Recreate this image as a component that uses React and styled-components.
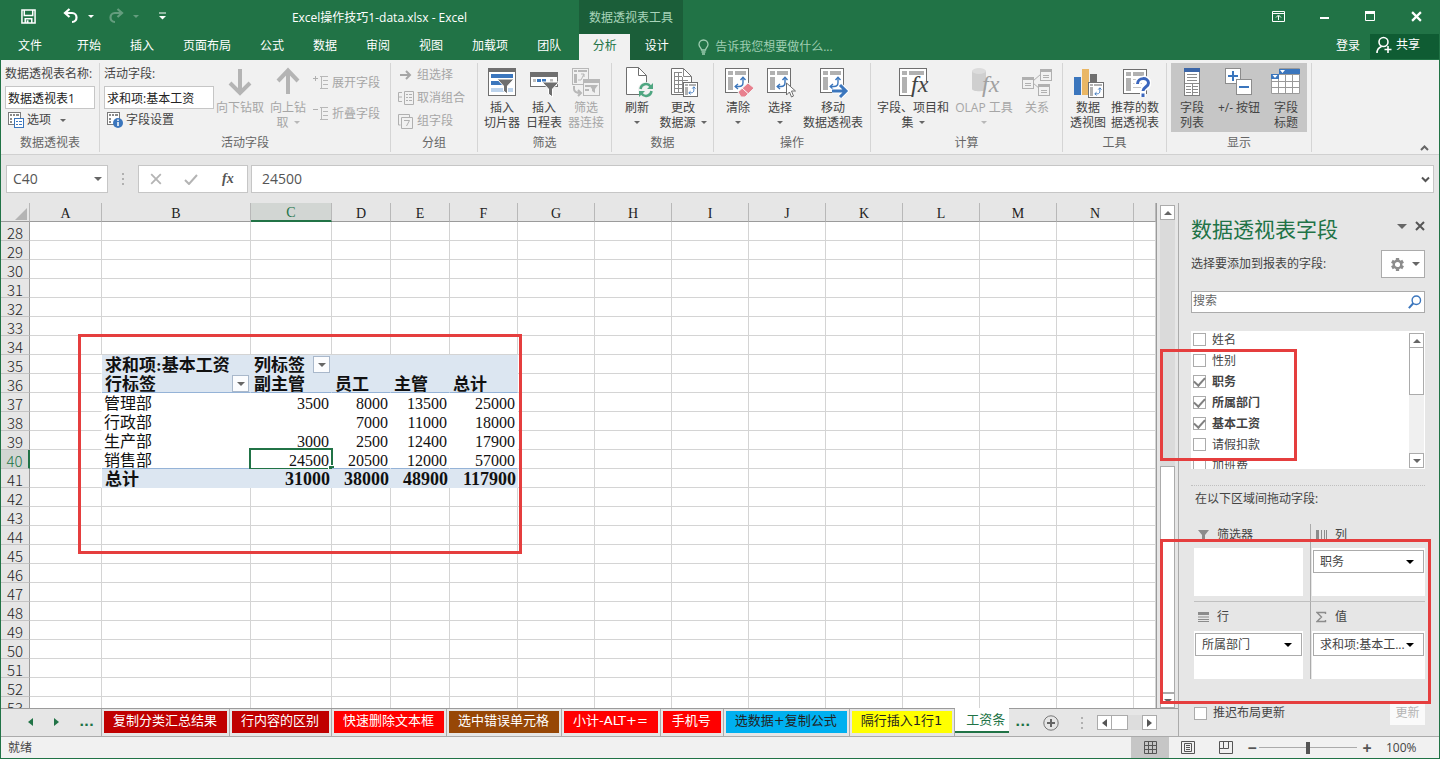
// src/App.jsx
import React from 'react';
import styled, { createGlobalStyle, css } from 'styled-components';

const GlobalStyle = createGlobalStyle`
    * {
        box-sizing: border-box;
    }

    body {
        margin: 0;
        font-family: 'Open Sans', 'Noto Sans CJK SC', sans-serif;
        font-size: 12px;
        line-height: 16px;
        color: #444444;
    }

    button,
    input {
        font: inherit;
        color: inherit;
    }

    button {
        margin: 0;
        padding: 0;
        border: none;
        background: transparent;
        cursor: pointer;
    }

    svg {
        display: block;
        flex: none;
    }
`;

const Window = styled.div`
    display: flex;
    flex-direction: column;
    height: 100vh;
    overflow: hidden;
    background-color: #e6e6e6;
    border: 1px solid #217346;
    border-top: none;
`;

const Caret = styled.span`
    display: inline-block;
    flex: none;
    border-left: ${(props) => props.$size || 3}px solid transparent;
    border-right: ${(props) => props.$size || 3}px solid transparent;
    border-top: ${(props) => props.$size || 3}px solid ${(props) => props.$color || '#666666'};
    vertical-align: middle;
`;

const CaretUp = styled(Caret)`
    border-top: none;
    border-bottom: ${(props) => props.$size || 3}px solid ${(props) => props.$color || '#666666'};
`;

/* ---------- title bar ---------- */

const TitleBar = styled.header`
    display: flex;
    flex: none;
    height: 34px;
    background-color: #217346;
    color: #ffffff;
`;

const TitleLeft = styled.div`
    display: flex;
    width: 578px;
`;

const QuickAccess = styled.div`
    display: flex;
    align-items: center;
    width: 179px;
    padding: 0 0 2px 20px;
`;

const QuickButton = styled.button`
    display: flex;
    align-items: center;
    gap: 9px;
    margin-right: ${(props) => props.$after || 0}px;
    opacity: ${(props) => (props.disabled ? 0.3 : 1)};
`;

const WindowTitle = styled.h1`
    flex: 1;
    margin: 0;
    font-size: 12px;
    font-weight: 400;
    line-height: 35px;
    text-align: center;
    white-space: nowrap;
`;

const ContextTitle = styled.div`
    width: 104px;
    background-color: #1b5e39;
    color: #a8d5ba;
    line-height: 35px;
    text-align: center;
`;

const WindowControls = styled.div`
    display: flex;
    margin-left: auto;
`;

const ControlButton = styled.button`
    display: flex;
    align-items: center;
    justify-content: center;
    width: 46px;
    height: 32px;
`;

/* ---------- ribbon tabs ---------- */

const TabRow = styled.nav`
    display: flex;
    flex: none;
    height: 26px;
    background-color: #217346;
    color: #ffffff;
`;

const TabButton = styled.button`
    padding: 0 14px 2px 15px;
    white-space: nowrap;
`;

const FileTab = styled(TabButton)`
    width: 57px;
    margin-right: 4px;
`;

const ContextTabs = styled.div`
    display: flex;
    width: 104px;
    margin-left: 4px;
    background-color: #1b5e39;
`;

const ContextTab = styled(TabButton)`
    width: ${(props) => (props.$active ? 51 : 53)}px;
    padding: 0 0 2px;
    background-color: ${(props) => (props.$active ? '#f1f1f1' : 'transparent')};
    color: ${(props) => (props.$active ? '#217346' : '#ffffff')};
`;

const TellMe = styled.label`
    display: flex;
    align-items: center;
    gap: 6px;
    padding-left: 15px;
    color: #a8d5ba;
`;

const TellMeInput = styled.input`
    width: 160px;
    padding: 0;
    border: none;
    background: transparent;

    &::placeholder {
        color: #9fceb2;
        opacity: 1;
    }
`;

const AccountArea = styled.div`
    display: flex;
    margin-left: auto;
`;

const ShareButton = styled.button`
    display: flex;
    align-items: center;
    gap: 4px;
    width: 69px;
    margin-bottom: 1px;
    padding: 0 0 3px 6px;
    background-color: #0f5c33;
`;

const LoginButton = styled.button`
    padding: 0 10px 2px;
`;

/* ---------- ribbon ---------- */

const RibbonBar = styled.section`
    position: relative;
    display: flex;
    flex: none;
    height: 95px;
    padding: 3px 0 2px;
    background-color: #f1f1f1;
    border-bottom: 1px solid #d0d0d0;
`;

const Group = styled.div`
    display: flex;
    flex-direction: column;
    flex: none;
    width: ${(props) => props.$width}px;
    border-right: 1px solid #d5d5d5;
`;

const GroupBody = styled.div`
    display: flex;
    flex: none;
    height: 71px;
    padding-left: ${(props) => props.$pad || 4}px;
`;

const GroupLabel = styled.div`
    line-height: 18px;
    text-align: center;
    color: #666666;
`;

const BigButton = styled.button`
    display: flex;
    flex-direction: column;
    align-items: center;
    gap: 2px;
    flex: none;
    width: ${(props) => props.$width}px;
    padding-top: 3px;
    line-height: 15px;
    white-space: nowrap;
    color: ${(props) => (props.disabled ? '#a6a6a6' : '#444444')};
`;

const BigLine = styled.span`
    display: flex;
    align-items: center;
    justify-content: center;
    gap: 5px;
    height: 15px;
`;

const BigLabel = styled.span`
    display: block;
`;

const PressedGroup = styled.div`
    display: flex;
    height: 69px;
    background-color: #c6c6c6;
`;

const FieldColumn = styled.div`
    display: flex;
    flex-direction: column;
    width: ${(props) => props.$width}px;
    padding-top: 3px;
`;

const FieldInput = styled.input`
    width: 100%;
    height: 23px;
    margin: 4px 0 3px;
    padding: 0 2px;
    border: 1px solid #c6c6c6;
    background-color: #ffffff;
    color: #222222;
`;

const SmallButton = styled.button`
    display: flex;
    align-items: center;
    gap: 3px;
    height: 16px;
    padding-left: 3px;
    white-space: nowrap;
    color: ${(props) => (props.disabled ? '#a6a6a6' : '#444444')};
`;

const SmallColumn = styled.div`
    display: flex;
    flex-direction: column;
    gap: ${(props) => props.$gap}px;
    padding-top: ${(props) => props.$top}px;
`;

const OptionCaret = styled(Caret)`
    margin-left: 6px;
`;

const CollapseButton = styled.button`
    align-self: flex-end;
    margin: 0 10px 0 auto;
`;

/* ---------- formula bar ---------- */

const FormulaBar = styled.section`
    display: flex;
    flex: none;
    height: 48px;
    padding: 10px 5px;
    font-size: 14px;
`;

const NameBox = styled.div`
    display: flex;
    align-items: center;
    width: 102px;
    padding-right: 5px;
    border: 1px solid #c6c6c6;
    background-color: #ffffff;
`;

const NameInput = styled.input`
    flex: 1;
    min-width: 0;
    padding: 0 6px;
    border: none;
    color: #555555;
`;

const Grip = styled.div`
    display: flex;
    flex-direction: column;
    justify-content: center;
    align-items: center;
    gap: 3px;
    width: 30px;
`;

const GripDot = styled.span`
    width: 2px;
    height: 2px;
    background-color: #b0b0b0;
`;

const FormulaButtons = styled.div`
    display: flex;
    align-items: center;
    justify-content: space-around;
    width: 110px;
    margin-right: 3px;
    border: 1px solid #c6c6c6;
    background-color: #ffffff;
`;

const FormulaField = styled.div`
    display: flex;
    align-items: center;
    flex: 1;
    padding: 0 3px 0 10px;
    border: 1px solid #c6c6c6;
    background-color: #ffffff;
`;

const FormulaInput = styled.input`
    flex: 1;
    padding: 0;
    border: none;
    color: #555555;
`;

/* ---------- sheet ---------- */

const Main = styled.main`
    display: flex;
    flex: 1;
    min-height: 0;
`;

const Workbook = styled.section`
    display: flex;
    flex-direction: column;
    flex: 1;
    min-width: 0;
`;

const SheetArea = styled.div`
    display: flex;
    flex: 1;
    min-height: 0;
`;

const SheetViewport = styled.div`
    position: relative;
    flex: 1;
    min-width: 0;
    overflow: hidden;
    border-right: 1px solid #9b9b9b;
`;

const Grid = styled.table`
    width: 100%;
    table-layout: fixed;
    border-collapse: separate;
    border-spacing: 0;
    background-color: #ffffff;
    font-family: 'Liberation Serif', 'Noto Sans CJK SC', serif;
    font-size: 16px;
    line-height: 15px;
    color: #111111;
`;

const ColHead = styled.th`
    height: 19px;
    padding: 2px 0 0;
    background-color: ${(props) => (props.$selected ? '#d2d6d3' : '#e6e6e6')};
    border-right: 1px solid #b8b8b8;
    border-bottom: ${(props) => (props.$selected ? '2px solid #217346' : '1px solid #9b9b9b')};
    color: ${(props) => (props.$selected ? '#217346' : '#222222')};
    font-size: 14px;
    font-weight: 400;
`;

const Corner = styled(ColHead)`
    padding: 3px 2px 0 14px;
`;

const CornerMark = styled.span`
    display: block;
    width: 0;
    border-left: 12px solid transparent;
    border-bottom: 12px solid #b4b4b4;
`;

const RowHead = styled.th`
    height: 19px;
    padding: 2px 0 0;
    background-color: ${(props) => (props.$selected ? '#d2d6d3' : '#e6e6e6')};
    border-right: ${(props) => (props.$selected ? '2px solid #217346' : '1px solid #9b9b9b')};
    border-bottom: 1px solid #c4c4c4;
    color: ${(props) => (props.$selected ? '#217346' : '#222222')};
    font-family: 'Noto Sans CJK SC', sans-serif;
    font-size: 15px;
    font-weight: 300;
`;

const Cell = styled.td`
    position: relative;
    height: 19px;
    padding: 3px 2px 0;
    border-right: 1px solid #d4d4d4;
    border-bottom: 1px solid #d4d4d4;
    text-align: ${(props) => (props.$number ? 'right' : 'left')};
    white-space: nowrap;

    ${(props) =>
        props.$plain &&
        css`
            border-color: #ffffff;
        `}

    ${(props) =>
        props.$openRight &&
        css`
            border-right-color: #ffffff;
        `}

    ${(props) =>
        props.$header &&
        css`
            padding: 3px 1px 0 3px;
            background-color: #dce6f1;
            border-color: #dce6f1;
            font-size: ${props.$number ? 18 : 17}px;
            font-weight: 700;
        `}

    ${(props) =>
        props.$ruled &&
        css`
            border-bottom-color: #95b3d7;
        `}
`;

const CellInner = styled.div`
    display: flex;
    justify-content: space-between;
    height: 15px;
`;

const FilterButton = styled.button`
    display: flex;
    align-items: center;
    justify-content: center;
    width: 17px;
    height: 17px;
    margin-top: -2px;
    background-color: #fbfcfe;
    border: 1px solid #a9b8cb;
`;

// frame of the active cell, with its fill handle
const ActiveFrame = styled.div`
    position: absolute;
    inset: -2px;
    border: 2px solid #217346;

    &::after {
        content: '';
        position: absolute;
        right: -3px;
        bottom: -3px;
        width: 5px;
        height: 5px;
        background-color: #217346;
        outline: 1px solid #ffffff;
    }
`;

const ScrollColumn = styled.div`
    display: flex;
    flex-direction: column;
    width: 21px;
    padding: 2px 3px 0;
`;

const ScrollButton = styled.button`
    display: flex;
    align-items: center;
    justify-content: center;
    flex: none;
    width: 15px;
    height: 15px;
    border: 1px solid #ababab;
    background-color: #ffffff;
`;

const ScrollSpace = styled.div`
    flex: ${(props) => props.$grow};
    background-color: ${(props) => props.$tint || '#dadada'};
`;

const ScrollThumb = styled.div`
    flex: ${(props) => props.$grow};
    background-color: #ffffff;
    border: 1px solid #ababab;
`;

const Highlight = styled.div`
    position: absolute;
    left: ${(props) => props.$left}px;
    top: ${(props) => props.$top}px;
    width: ${(props) => props.$width}px;
    height: ${(props) => props.$height}px;
    border: 3px solid #e53e3e;
    pointer-events: none;
    z-index: 2;
`;

/* ---------- sheet tabs ---------- */

const SheetTabs = styled.div`
    display: flex;
    flex: none;
    height: 28px;
    border-top: 1px solid #9b9b9b;
    font-family: 'DejaVu Sans', 'Noto Sans CJK SC', sans-serif;
    font-size: 13px;
`;

const TabNav = styled.div`
    display: flex;
    align-items: center;
    width: 101px;
    padding: 0 7px 2px 27px;
    justify-content: space-between;
    color: #217346;
    font-weight: 700;
    border-right: 1px solid #ababab;
`;

const SheetTab = styled.button`
    flex: none;
    height: 22px;
    margin: 2px 2px 0 1px;
    padding: 0 10px 3px 9px;
    background-color: ${(props) => props.$color};
    color: ${(props) => props.$text || '#ffffff'};
    white-space: nowrap;
`;

const TabSlot = styled.div`
    display: flex;
    padding-left: 1px;
    border-right: 1px solid #ababab;
`;

const ActiveTab = styled.button`
    flex: none;
    height: 25px;
    margin-top: -1px;
    padding: 0 4px 0 11px;
    background-color: #ffffff;
    border-bottom: 2px solid #217346;
    color: #217346;
    white-space: nowrap;
`;

const MoreTabs = styled.button`
    padding: 0 13px 2px 6px;
    color: #217346;
    font-weight: 700;
`;

const TabScroll = styled.div`
    display: flex;
    align-items: center;
    margin-left: auto;
    padding-right: 21px;
`;

const TabScrollThumb = styled.div`
    width: 17px;
    height: 15px;
    margin-left: -1px;
    border: 1px solid #ababab;
    background-color: #ffffff;
`;

const TabScrollSpace = styled.div`
    width: 14px;
    height: 15px;
    background-color: #dddddd;
`;

/* ---------- field pane ---------- */

const Pane = styled.aside`
    position: relative;
    display: flex;
    flex-direction: column;
    flex: none;
    width: 261px;
    padding: 11px 14px 0 12px;
    border-left: 1px solid #ababab;
`;

const PaneHead = styled.div`
    display: flex;
    align-items: center;
    gap: 8px;
    height: 30px;
`;

const PaneTitle = styled.h2`
    flex: 1;
    margin: 0;
    color: #217346;
    font-size: 21px;
    font-weight: 400;
    line-height: 30px;
`;

const PaneHeadButton = styled.button`
    margin-bottom: 6px;
`;

const PaneRow = styled.div`
    display: flex;
    align-items: center;
    justify-content: space-between;
    height: 28px;
    margin: 6px 0 13px;
`;

const ToolsButton = styled.button`
    display: flex;
    align-items: center;
    justify-content: space-between;
    width: 44px;
    height: 28px;
    padding: 0 4px 0 8px;
    border: 1px solid #ababab;
    background-color: #ffffff;
`;

const SearchBox = styled.label`
    display: flex;
    align-items: center;
    height: 22px;
    padding: 0 2px 0 0;
    border: 1px solid #ababab;
    background-color: #ffffff;
`;

const SearchInput = styled.input`
    flex: 1;
    min-width: 0;
    padding: 0 0 2px 1px;
    border: none;
    background: transparent;

    &::placeholder {
        color: #666666;
        opacity: 1;
    }
`;

const FieldList = styled.div`
    display: flex;
    height: 138px;
    margin-top: 18px;
    padding: 0 1px 0 2px;
    background-color: #ffffff;
`;

const FieldRows = styled.div`
    flex: 1;
    overflow: hidden;
`;

const FieldRow = styled.label`
    display: flex;
    align-items: center;
    gap: 6px;
    height: 21px;
    padding-bottom: 4px;
    font-weight: ${(props) => (props.$bold ? 700 : 400)};
    color: #444444;
`;

const Check = styled.input`
    display: grid;
    place-items: center;
    flex: none;
    width: 13px;
    height: 13px;
    margin: 0;
    appearance: none;
    border: 1px solid #ababab;
    background-color: #ffffff;

    &:checked::after {
        content: '';
        width: 9px;
        height: 5px;
        margin-bottom: 3px;
        border-left: 2px solid #808080;
        border-bottom: 2px solid #808080;
        transform: rotate(-48deg);
    }
`;

const ListScroll = styled.div`
    display: flex;
    flex-direction: column;
    width: 15px;
    padding: 2px 0 1px;
`;

const ListThumb = styled.div`
    height: 48px;
    margin-top: -1px;
    border: 1px solid #ababab;
    background-color: #ffffff;
`;

const AreaIntro = styled.div`
    margin-top: 16px;
    padding: 5px 0 17px 4px;
    border-top: 1px dotted #c0c0c0;
`;

const Areas = styled.div`
    display: grid;
    grid-template-columns: 116px 1fr;
    padding-left: 3px;
`;

const Area = styled.div`
    display: flex;
    flex-direction: column;
    height: ${(props) => (props.$second ? 77 : 78)}px;
    padding: ${(props) => (props.$right ? '0 0 0 1px' : '0 7px 0 0')};
    border-left: ${(props) => (props.$right ? '1px solid #ababab' : 'none')};
    border-bottom: ${(props) => (props.$second ? 'none' : '1px solid #c0c0c0')};
`;

const AreaHead = styled.div`
    display: flex;
    align-items: center;
    gap: 7px;
    height: ${(props) => (props.$second ? 29 : 24)}px;
    padding: 0 0 ${(props) => (props.$second ? 0 : 2)}px 4px;
`;

const AreaBox = styled.div`
    height: 48px;
    padding: 2px 1px;
    background-color: #ffffff;
`;

const AreaItem = styled.button`
    display: flex;
    align-items: center;
    justify-content: space-between;
    width: 100%;
    height: 23px;
    padding: 0 9px 0 6px;
    border: 1px solid #ababab;
    background-color: #ffffff;
    white-space: nowrap;
`;

const PaneFoot = styled.div`
    display: flex;
    align-items: center;
    justify-content: space-between;
    height: 24px;
    margin-top: 22px;
    padding-left: 3px;
`;

const DeferLabel = styled.label`
    display: flex;
    align-items: center;
    gap: 6px;
`;

const UpdateButton = styled.button`
    width: 35px;
    height: 24px;
    background-color: #fafafa;
    color: #b4b4b4;
`;

/* ---------- status bar ---------- */

const StatusBar = styled.footer`
    display: flex;
    align-items: center;
    flex: none;
    height: 22px;
    padding: 0 20px 0 7px;
    background-color: #f1f1f1;
    border-top: 1px solid #ababab;
`;

const StatusRight = styled.div`
    display: flex;
    align-items: center;
    align-self: stretch;
    margin-left: auto;
`;

const ViewButton = styled.button`
    display: flex;
    align-items: center;
    justify-content: center;
    align-self: stretch;
    width: 38px;
    background-color: ${(props) => (props.$active ? '#c6c6c6' : 'transparent')};
`;

const ZoomButton = styled.button`
    width: 14px;
    font-size: 16px;
    font-weight: 700;
    color: #555555;
`;

const ZoomSlider = styled.input`
    width: 98px;
    height: 16px;
    margin: 0 3px 0 0;
    appearance: none;
    background: linear-gradient(#ababab, #ababab) center / 100% 1px no-repeat;

    &::-webkit-slider-thumb {
        appearance: none;
        width: 4px;
        height: 12px;
        background-color: #555555;
    }
`;

const ZoomValue = styled.span`
    width: 33px;
    margin-left: 12px;
`;

/* ---------- icons ---------- */

const Swoop = ({ x = 0, y = 0, color = '#3b76bd', size = 1 }) => (
    <g transform={`translate(${x} ${y}) scale(${size})`} fill="none" stroke={color} strokeWidth="1.4">
        <path d="M1.5 10.5h3.5c3 0 4-2 4-4V1.5" />
        <path d="M6.5 4L9 1.2 11.5 4M4 8L1.2 10.5 4 13" />
    </g>
);

const PivotFrame = ({ x = 3, y = 2, color = '#6f6f6f', swoop = true }) => (
    <g transform={`translate(${x} ${y})`}>
        <rect x=".5" y=".5" width="23" height="24" fill="#fff" stroke={color} />
        <path d="M3 3h5v4H3zM10 3h11v4H10zM3 9h5v13H3z" fill="#b1b1b1" />
        {swoop && <Swoop x={9} y={8} />}
    </g>
);

const Svg32 = ({ children }) => (
    <svg width="32" height="32" viewBox="0 0 32 32" aria-hidden="true">
        {children}
    </svg>
);

const funnel = 'M0 0h17l-6.500 7v8l-4-3V7z';

const SlicerIcon = () => (
    <Svg32>
        <rect x="2.500" y="2.500" width="27" height="27" fill="#fff" stroke="#6f6f6f" />
        <path d="M2 2h28v4H2z" fill="#6f6f6f" />
        <path d="M5 8h22v4H5zM5 15h12v4H5z" fill="#3b76bd" />
        <path d="M5 22h22v4H5z" fill="#bcd3ec" />
        <path d={funnel} transform="translate(11 13)" fill="#6f6f6f" stroke="#fff" />
    </Svg32>
);

const TimelineIcon = () => (
    <Svg32>
        <rect x="2.500" y="6.500" width="27" height="14" fill="#fff" stroke="#6f6f6f" />
        <path d="M2 6h28v5H2z" fill="#6f6f6f" />
        <path d="M5 13h3v3H5zM22 13h3v3h-3z" fill="#bdbdbd" />
        <path d="M9 13h4v3H9zM14 13h4v3h-4z" fill="#3b76bd" />
        <path d={funnel} transform="translate(14 16)" fill="#6f6f6f" stroke="#fff" />
    </Svg32>
);

const FilterLinkIcon = () => (
    <Svg32>
        <g fill="none" stroke="#b8b8b8">
            <rect x="2.500" y="2.500" width="16" height="16" />
            <rect x="13.500" y="13.500" width="16" height="16" fill="#f1f1f1" />
            <path d="M4 20v3c0 3 2 4 7 4M8 24l3 3-3 3" strokeWidth="2" />
            <path d="M8 14h3l3-6M11 8h3v3" />
        </g>
        <path d="M4 4h3v2H4zM8 4h9v2H8zM4 8h3v9H4zM13 13h17v4H13zM15 19h5v2h-5zM15 23h4v2h-4zM19 19h9l-3 4v4l-3-2v-2z" fill="#b8b8b8" />
    </Svg32>
);

const RefreshIcon = () => (
    <Svg32>
        <path d="M5.500 1.500h12l8 8v19h-20z" fill="#fff" stroke="#6f6f6f" />
        <path d="M17.500 1.500v8h8" fill="none" stroke="#6f6f6f" />
        <circle cx="25" cy="24" r="8" fill="#f1f1f1" />
        <g fill="none" stroke="#4fa681" strokeWidth="2.500">
            <path d="M19.500 23a5.500 5.500 0 0 1 10-2.500M30.500 25a5.500 5.500 0 0 1-10 2.500" />
        </g>
        <path d="M32 17v6h-6zM18 31v-6h6z" fill="#4fa681" />
    </Svg32>
);

const ChangeSourceIcon = () => (
    <Svg32>
        <path d="M4.500 2.500h12l8 8v18h-20z" fill="#fff" stroke="#6f6f6f" />
        <path d="M16.500 2.500v8h8M7 6.500h8M7 10.500h8M7 14.500h14M7 18.500h9M7 22.500h9M7 26.500h9M7.500 6v20M11.500 6v20M15.500 11v15" fill="none" stroke="#8a8a8a" />
        <rect x="16.500" y="16.500" width="14" height="14" fill="#fff" stroke="#6f6f6f" />
        <path d="M18 18h3v2h-3zM22 18h7v2h-7zM18 21h3v8h-3z" fill="#b1b1b1" />
        <Swoop x={21} y={20} size={0.650} />
    </Svg32>
);

const ClearIcon = () => (
    <Svg32>
        <PivotFrame />
        <path d="M16 26l10-9 6 5-9 9h-4z" fill="#e8808e" stroke="#f1f1f1" />
        <path d="M20 22l6 5.500" stroke="#fff" />
    </Svg32>
);

const SelectIcon = () => (
    <Svg32>
        <PivotFrame />
        <path d="M22.500 17v12l3-3 2 5 2-1-2-5h4z" fill="#fff" stroke="#6f6f6f" />
    </Svg32>
);

const MoveIcon = () => (
    <Svg32>
        <PivotFrame />
        <path d="M15 25h13M23 19l6 6-6 6" fill="none" stroke="#fff" strokeWidth="5" />
        <path d="M15 25h13M23 19l6 6-6 6" fill="none" stroke="#3b76bd" strokeWidth="3" />
    </Svg32>
);

// the italic "fx" mark is real text
const FxText = styled.text`
    font-family: 'Liberation Serif', serif;
    font-size: ${(props) => props.$size}px;
    font-style: italic;
    font-weight: ${(props) => props.$weight || 400};
`;

const FieldsIcon = () => (
    <Svg32>
        <g transform="translate(2 2)">
            <rect x=".5" y=".5" width="27" height="27" fill="#fff" stroke="#6f6f6f" />
            <path d="M3 3h5v4H3zM10 3h15v4H10zM3 9h5v16H3z" fill="#b1b1b1" />
        </g>
        <path d="M18 15h14v17H15z" fill="#f1f1f1" />
        <FxText x="14" y="26" $size={24} fill="#444">fx</FxText>
    </Svg32>
);

const OlapIcon = () => (
    <Svg32>
        <path d="M4 5v18c0 3 14 3 14 0V5z" fill="#cfcfcf" />
        <ellipse cx="11" cy="5" rx="7" ry="3" fill="#dcdcdc" />
        <FxText x="14" y="26" $size={24} fill="#a0a0a0">fx</FxText>
    </Svg32>
);

const RelationIcon = () => (
    <Svg32>
        <g fill="#f1f1f1" stroke="#b0b0b0">
            <path d="M12 15l8-7M12 17l7 6" />
            <rect x="1.500" y="11.500" width="11" height="11" />
            <rect x="19.500" y="3.500" width="11" height="11" />
            <rect x="17.500" y="18.500" width="11" height="11" />
            <path d="M4 17.500h6M4 19.500h6M22 9.500h6M22 11.500h6M20 24.500h6M20 26.500h6" />
        </g>
        <path d="M1 11h12v3H1zM19 3h12v3H19zM17 18h12v3H17z" fill="#b0b0b0" />
    </Svg32>
);

const ChartIcon = () => (
    <Svg32>
        <path d="M2 11h7v18H2z" fill="#3b76bd" />
        <path d="M10 3h7v26h-7z" fill="#eab765" />
        <path d="M18 8h7v9h-7z" fill="#6f6f6f" />
        <rect x="16.500" y="16.500" width="15" height="15" fill="#fff" stroke="#6f6f6f" />
        <path d="M18 18h3v2h-3zM22 18h8v2h-8zM18 21h3v9h-3z" fill="#b1b1b1" />
        <Swoop x={22} y={21} size={0.650} />
    </Svg32>
);

const RecommendIcon = () => (
    <Svg32>
        <PivotFrame x={4} y={3} swoop={false} />
        <path d="M14 13.500h11M14 17.500h9M14 21.500h8" stroke="#c4c4c4" />
        <path d="M18.500 18c0-7 11-7 11-1 0 4-5.500 4-5.500 8M24 27v4" fill="none" stroke="#fff" strokeWidth="6" />
        <path d="M18.500 18c0-7 11-7 11-1 0 4-5.500 4-5.500 8M24 27.500v3.500" fill="none" stroke="#3b66bd" strokeWidth="3" />
    </Svg32>
);

const FieldListIcon = () => (
    <Svg32>
        <rect x="8.500" y="2.500" width="15" height="27" fill="#fff" stroke="#7f7f7f" />
        <path d="M8 2h16v4H8z" fill="#3b66a8" />
        <path d="M11 8.500h10M11 11.500h10M11 14.500h10M9 17.500h14M10 20.500h5M17 20.500h5M10 23.500h5M17 23.500h5M10 26.500h5M17 26.500h5M16.500 18v11" stroke="#8c8c8c" />
    </Svg32>
);

const PlusMinusIcon = () => (
    <Svg32>
        <rect x="2.500" y="2.500" width="15" height="15" fill="#fff" stroke="#8c8c8c" />
        <path d="M10 5v10M5 10h10" stroke="#3b76bd" strokeWidth="2" />
        <rect x="13.500" y="13.500" width="15" height="15" fill="#fff" stroke="#8c8c8c" />
        <path d="M16 21h10" stroke="#3b76bd" strokeWidth="2" />
    </Svg32>
);

const FieldHeadIcon = () => (
    <Svg32>
        <path d="M1.500 8.500h28v19h-28zM9.500 2.500h20v6h-20z" fill="#fff" stroke="#9a9a9a" />
        <path d="M8.500 9v18M15.500 9v18M22.500 9v18M2 15.500h28M2 21.500h28" stroke="#9a9a9a" />
        <path d="M9 3h21v5H9zM1 8h8v5H1z" fill="#3b76bd" />
        <path d="M10 4h5l-2.500 3zM2.500 9h5l-2.500 3z" fill="#fff" />
    </Svg32>
);

const DrillIcon = ({ up }) => (
    <Svg32>
        <path
            d={up ? 'M16 28V6M6 15L16 4.500 26 15' : 'M16 3v22M6 17l10 10 10-10'}
            fill="none"
            stroke="#b4b4b4"
            strokeWidth="4"
        />
    </Svg32>
);

const Svg16 = ({ children, size = 16 }) => (
    <svg width={size} height={size} viewBox="0 0 16 16" aria-hidden="true">
        {children}
    </svg>
);

const OptionsIcon = ({ info }) => (
    <Svg16>
        <rect x=".5" y=".5" width="12" height="12" fill="#fff" stroke="#7a7a7a" />
        <path d="M2 2h2v2H2zM5 2h2v2H5zM8 2h3v2H8zM2 6h2v2H2zM2 9h2v2H2z" fill="#8a8a8a" />
        {info ? (
            <>
                <circle cx="11" cy="11" r="5" fill="#3b76bd" />
                <path d="M11 10v4M11 7.500v1.500" stroke="#fff" strokeWidth="1.500" />
            </>
        ) : (
            <>
                <rect x="6.500" y="6.500" width="9" height="9" fill="#fff" stroke="#3b76bd" />
                <path d="M8 9.500h2M8 12.500h2M11 9.500h3M11 12.500h3" stroke="#3b76bd" />
            </>
        )}
    </Svg16>
);

const ExpandIcon = ({ minus }) => (
    <Svg16>
        <path d="M0 3.500h5" stroke="#b0b0b0" />
        {!minus && <path d="M2.500 1v5" stroke="#b0b0b0" />}
        <path d="M7 1.500h8M10 5.500h5M10 9.500h5M7 13.500h8M8.500 2v11" fill="none" stroke="#b8b8b8" />
    </Svg16>
);

const GroupSelIcon = () => (
    <Svg16>
        <path d="M2 8h10M8 4l4 4-4 4" fill="none" stroke="#a6a6a6" strokeWidth="2" />
    </Svg16>
);

const UngroupIcon = () => (
    <Svg16>
        <path d="M4 2.500H.5v9H4M1 7h3M6.500 1.500h9v13h-9zM8 4.500h2M11 4.500h3M8 7.500h2M11 7.500h3M8 10.500h2M11 10.500h3" fill="none" stroke="#b0b0b0" />
    </Svg16>
);

const GroupFieldIcon = () => (
    <Svg16>
        <path d="M2.500 12H.5V1.500h11V4M3.500 4.500h11v11h-11zM6 7.500h5.500L8.500 13" fill="none" stroke="#b0b0b0" />
    </Svg16>
);

const SaveIcon = () => (
    <Svg16 size={15}>
        <path d="M1 1h14v14H1zM3.500 1v6h9V1M4.500 15v-4.500h7V15" fill="none" stroke="#fff" strokeWidth="1.600" />
        <path d="M6 12h2v3H6z" fill="#fff" />
    </Svg16>
);

const UndoIcon = ({ flip }) => (
    <Svg16>
        <path
            d="M6.500 1L2 5l4.500 4M2 5h7c6 0 6 9 0 9"
            transform={flip ? 'translate(16 0) scale(-1 1)' : undefined}
            fill="none"
            stroke="#fff"
            strokeWidth="2.200"
        />
    </Svg16>
);

const BulbIcon = () => (
    <svg width="11" height="16" viewBox="0 0 11 16" aria-hidden="true">
        <path d="M3.500 11c0-2-2.500-3-2.500-5.500a4.500 4.500 0 0 1 9 0C10 8 7.500 9 7.500 11zM3.500 13h4M4 15h3" fill="none" stroke="#9fceb2" strokeWidth="1.300" />
    </svg>
);

const PersonIcon = () => (
    <svg width="16" height="18" viewBox="0 0 16 18" aria-hidden="true">
        <circle cx="7.500" cy="6" r="4.500" fill="none" stroke="#fff" strokeWidth="1.600" />
        <path d="M1 17c0-3 2-5.500 4.500-6.500M12 10v7M8.500 13.500h7" fill="none" stroke="#fff" strokeWidth="1.600" />
    </svg>
);

const ArrowIcon = ({ left, color = '#217346' }) => (
    <svg width="5" height="8" viewBox="0 0 5 8" aria-hidden="true">
        <path d={left ? 'M5 0v8L0 4z' : 'M0 0v8l5-4z'} fill={color} />
    </svg>
);

const CrossIcon = ({ size = 10, color, weight = 2 }) => (
    <svg width={size} height={size} viewBox="0 0 10 10" aria-hidden="true">
        <path d="M1 1l8 8M9 1L1 9" stroke={color} strokeWidth={weight} />
    </svg>
);

const GearIcon = () => (
    <Svg16 size={15}>
        <path d="M8 1v14M2 4.500l12 7M14 4.500l-12 7" stroke="#8c8c8c" strokeWidth="3.500" />
        <circle cx="8" cy="8" r="4" fill="#fff" stroke="#8c8c8c" strokeWidth="2.500" />
    </Svg16>
);

const SearchIcon = () => (
    <Svg16 size={14}>
        <circle cx="9.500" cy="6" r="4.800" fill="none" stroke="#3b76bd" strokeWidth="1.600" />
        <path d="M6 9.500L1 15" stroke="#3b76bd" strokeWidth="2.400" />
    </Svg16>
);

const areaIcons = {
    filter: <path d="M0 1h11L7 6v6l-3-2V6z" fill="#8c8c8c" />,
    columns: <path d="M0 1h3v10H0zM5 1h1v10H5zM8 1h1v10H8zM10 1h1v10h-1z" fill="#8c8c8c" />,
    rows: <path d="M0 1h11v3H0zM0 5.500h11v1H0zM0 8h11v1H0zM0 10h11v1H0z" fill="#8c8c8c" />,
    values: <path d="M9.500 3V1.500H1L5.500 6 1 10.500h8.500V9" fill="none" stroke="#8c8c8c" strokeWidth="1.400" />,
};

const AreaIcon = ({ kind }) => (
    <svg width="12" height="12" viewBox="0 0 12 12" aria-hidden="true">
        {areaIcons[kind]}
    </svg>
);

/* ---------- data ---------- */

const ribbonTabs = ['开始', '插入', '页面布局', '公式', '数据', '审阅', '视图', '加载项', '团队'];

const columns = [
    ['A', 72],
    ['B', 149],
    ['C', 81],
    ['D', 59],
    ['E', 59],
    ['F', 68],
    ['G', 77],
    ['H', 77],
    ['I', 77],
    ['J', 77],
    ['K', 77],
    ['L', 77],
    ['M', 77],
    ['N', 77],
    ['', null],
];

const rowNumbers = Array.from({ length: 26 }, (_, i) => 28 + i);

const pivot = {
    35: ['求和项:基本工资', '列标签', '', '', ''],
    36: ['行标签', '副主管', '员工', '主管', '总计'],
    37: ['管理部', 3500, 8000, 13500, 25000],
    38: ['行政部', '', 7000, 11000, 18000],
    39: ['生产部', 3000, 2500, 12400, 17900],
    40: ['销售部', 24500, 20500, 12000, 57000],
    41: ['总计', 31000, 38000, 48900, 117900],
};

const filterCells = ['35C', '36B'];

const sheets = [
    { name: '复制分类汇总结果', color: '#c00000' },
    { name: '行内容的区别', color: '#c00000' },
    { name: '快速删除文本框', color: '#ff0000' },
    { name: '选中错误单元格', color: '#974706' },
    { name: '小计-ALT+=', color: '#ff0000' },
    { name: '手机号', color: '#ff0000' },
    { name: '选数据+复制公式', color: '#00b0f0', text: '#222222' },
    { name: '隔行插入1行1', color: '#ffff00', text: '#222222' },
];

const fields = [
    ['姓名', false],
    ['性别', false],
    ['职务', true],
    ['所属部门', true],
    ['基本工资', true],
    ['请假扣款', false],
    ['加班费', false],
];

const areas = [
    { icon: 'filter', title: '筛选器' },
    { icon: 'columns', title: '列', item: '职务', right: true },
    { icon: 'rows', title: '行', item: '所属部门', second: true },
    { icon: 'values', title: '值', item: '求和项:基本工...', right: true, second: true },
];

/* ---------- components ---------- */

// lines: one entry per text line, caret: index of the line that ends with the arrow
function RibbonButton({ icon, lines, caret, width, disabled }) {
    return (
        <BigButton $width={width} disabled={disabled}>
            {icon}
            <BigLabel>
                {lines.map((line, index) => (
                    <BigLine key={index}>
                        {line}
                        {caret === index && <Caret $color={disabled ? '#b8b8b8' : '#666666'} />}
                    </BigLine>
                ))}
            </BigLabel>
        </BigButton>
    );
}

function Ribbon() {
    return (
        <RibbonBar>
            <Group $width={99}>
                <GroupBody>
                    <FieldColumn $width={90}>
                        <label htmlFor="pivot-name">数据透视表名称:</label>
                        <FieldInput id="pivot-name" defaultValue="数据透视表1" />
                        <SmallButton>
                            <OptionsIcon />
                            选项
                            <OptionCaret />
                        </SmallButton>
                    </FieldColumn>
                </GroupBody>
                <GroupLabel>数据透视表</GroupLabel>
            </Group>
            <Group $width={291}>
                <GroupBody>
                    <FieldColumn $width={110}>
                        <label htmlFor="active-field">活动字段:</label>
                        <FieldInput id="active-field" defaultValue="求和项:基本工资" />
                        <SmallButton>
                            <OptionsIcon info />
                            字段设置
                        </SmallButton>
                    </FieldColumn>
                    <RibbonButton disabled width={52} icon={<DrillIcon />} lines={['向下钻取']} />
                    <RibbonButton disabled width={44} icon={<DrillIcon up />} lines={['向上钻', '取']} caret={1} />
                    <SmallColumn $top={12} $gap={15}>
                        <SmallButton disabled>
                            <ExpandIcon />
                            展开字段
                        </SmallButton>
                        <SmallButton disabled>
                            <ExpandIcon minus />
                            折叠字段
                        </SmallButton>
                    </SmallColumn>
                </GroupBody>
                <GroupLabel>活动字段</GroupLabel>
            </Group>
            <Group $width={87}>
                <GroupBody>
                    <SmallColumn $top={4} $gap={7}>
                        <SmallButton disabled>
                            <GroupSelIcon />
                            组选择
                        </SmallButton>
                        <SmallButton disabled>
                            <UngroupIcon />
                            取消组合
                        </SmallButton>
                        <SmallButton disabled>
                            <GroupFieldIcon />
                            组字段
                        </SmallButton>
                    </SmallColumn>
                </GroupBody>
                <GroupLabel>分组</GroupLabel>
            </Group>
            <Group $width={134}>
                <GroupBody $pad={3}>
                    <RibbonButton width={42} icon={<SlicerIcon />} lines={['插入', '切片器']} />
                    <RibbonButton width={42} icon={<TimelineIcon />} lines={['插入', '日程表']} />
                    <RibbonButton disabled width={42} icon={<FilterLinkIcon />} lines={['筛选', '器连接']} />
                </GroupBody>
                <GroupLabel>筛选</GroupLabel>
            </Group>
            <Group $width={102}>
                <GroupBody $pad={3}>
                    <RibbonButton width={44} icon={<RefreshIcon />} lines={['刷新', '']} caret={1} />
                    <RibbonButton width={48} icon={<ChangeSourceIcon />} lines={['更改', '数据源']} caret={1} />
                </GroupBody>
                <GroupLabel>数据</GroupLabel>
            </Group>
            <Group $width={157}>
                <GroupBody $pad={3}>
                    <RibbonButton width={42} icon={<ClearIcon />} lines={['清除', '']} caret={1} />
                    <RibbonButton width={42} icon={<SelectIcon />} lines={['选择', '']} caret={1} />
                    <RibbonButton width={64} icon={<MoveIcon />} lines={['移动', '数据透视表']} />
                </GroupBody>
                <GroupLabel>操作</GroupLabel>
            </Group>
            <Group $width={192}>
                <GroupBody>
                    <RibbonButton width={76} icon={<FieldsIcon />} lines={['字段、项目和', '集']} caret={1} />
                    <RibbonButton disabled width={66} icon={<OlapIcon />} lines={['OLAP 工具', '']} caret={1} />
                    <RibbonButton disabled width={40} icon={<RelationIcon />} lines={['关系']} />
                </GroupBody>
                <GroupLabel>计算</GroupLabel>
            </Group>
            <Group $width={104}>
                <GroupBody>
                    <RibbonButton width={42} icon={<ChartIcon />} lines={['数据', '透视图']} />
                    <RibbonButton width={52} icon={<RecommendIcon />} lines={['推荐的数', '据透视表']} />
                </GroupBody>
                <GroupLabel>工具</GroupLabel>
            </Group>
            <Group $width={145}>
                <GroupBody>
                    <PressedGroup>
                        <RibbonButton width={42} icon={<FieldListIcon />} lines={['字段', '列表']} />
                        <RibbonButton width={52} icon={<PlusMinusIcon />} lines={['+/- 按钮']} />
                        <RibbonButton width={42} icon={<FieldHeadIcon />} lines={['字段', '标题']} />
                    </PressedGroup>
                </GroupBody>
                <GroupLabel>显示</GroupLabel>
            </Group>
            <CollapseButton aria-label="折叠功能区">
                <svg width="9" height="8" viewBox="0 0 9 8">
                    <path d="M1 6l3.500-3.500L8 6" fill="none" stroke="#666" strokeWidth="2" />
                </svg>
            </CollapseButton>
        </RibbonBar>
    );
}

function SheetCell({ row, column }) {
    const index = ['B', 'C', 'D', 'E', 'F'].indexOf(column);
    const values = pivot[row];

    if (!values || index < 0) {
        return <Cell $openRight={values && column === 'A'} />;
    }

    const value = values[index];
    const header = row < 37 || row === 41;
    const hasFilter = filterCells.includes(`${row}${column}`);

    return (
        <Cell
            $header={header}
            $plain={!header}
            $number={typeof value === 'number'}
            $ruled={row === 36 || row === 40}
        >
            {hasFilter ? (
                <CellInner>
                    {value}
                    <FilterButton aria-label={`筛选${value}`}>
                        <Caret $size={4} />
                    </FilterButton>
                </CellInner>
            ) : (
                value
            )}
            {row === 40 && column === 'C' && <ActiveFrame />}
        </Cell>
    );
}

function Sheet() {
    return (
        <SheetViewport>
            <Grid>
                <colgroup>
                    <col width={29} />
                    {columns.map(([name, width]) => (
                        <col key={name} width={width || undefined} />
                    ))}
                </colgroup>
                <thead>
                    <tr>
                        <Corner>
                            <CornerMark />
                        </Corner>
                        {columns.map(([name]) => (
                            <ColHead key={name} $selected={name === 'C'}>
                                {name}
                            </ColHead>
                        ))}
                    </tr>
                </thead>
                <tbody>
                    {rowNumbers.map((row) => (
                        <tr key={row}>
                            <RowHead $selected={row === 40}>{row}</RowHead>
                            {columns.map(([name]) => (
                                <SheetCell key={name} row={row} column={name} />
                            ))}
                        </tr>
                    ))}
                </tbody>
            </Grid>
            <Highlight $left={77} $top={131} $width={444} $height={220} />
        </SheetViewport>
    );
}

function SheetTabBar() {
    return (
        <SheetTabs>
            <TabNav>
                <ArrowIcon left />
                <ArrowIcon />
                <span>...</span>
            </TabNav>
            {sheets.map((sheet) => (
                <TabSlot key={sheet.name}>
                    <SheetTab $color={sheet.color} $text={sheet.text}>
                        {sheet.name}
                    </SheetTab>
                </TabSlot>
            ))}
            <ActiveTab>工资条</ActiveTab>
            <MoreTabs>...</MoreTabs>
            <button aria-label="新工作表">
                <Svg16>
                    <circle cx="8" cy="8" r="7.200" fill="none" stroke="#777" />
                    <path d="M8 4v8M4 8h8" stroke="#666" strokeWidth="2" />
                </Svg16>
            </button>
            <TabScroll>
                <Grip>
                    <GripDot />
                    <GripDot />
                    <GripDot />
                </Grip>
                <ScrollButton aria-label="向左">
                    <ArrowIcon left color="#555" />
                </ScrollButton>
                <TabScrollThumb />
                <TabScrollSpace />
                <ScrollButton aria-label="向右">
                    <ArrowIcon color="#555" />
                </ScrollButton>
            </TabScroll>
        </SheetTabs>
    );
}

function FieldPane() {
    return (
        <Pane>
            <PaneHead>
                <PaneTitle>数据透视表字段</PaneTitle>
                <PaneHeadButton aria-label="任务窗格选项">
                    <Caret $size={5} />
                </PaneHeadButton>
                <PaneHeadButton aria-label="关闭">
                    <CrossIcon color="#555" />
                </PaneHeadButton>
            </PaneHead>
            <PaneRow>
                选择要添加到报表的字段:
                <ToolsButton aria-label="工具">
                    <GearIcon />
                    <Caret $size={4} />
                </ToolsButton>
            </PaneRow>
            <SearchBox>
                <SearchInput placeholder="搜索" aria-label="搜索" />
                <SearchIcon />
            </SearchBox>
            <FieldList>
                <FieldRows>
                    {fields.map(([name, checked]) => (
                        <FieldRow key={name} $bold={checked}>
                            <Check type="checkbox" defaultChecked={checked} />
                            {name}
                        </FieldRow>
                    ))}
                </FieldRows>
                <ListScroll>
                    <ScrollButton aria-label="向上">
                        <CaretUp $size={4} />
                    </ScrollButton>
                    <ListThumb />
                    <ScrollSpace $grow={1} $tint="#f0f0f0" />
                    <ScrollButton aria-label="向下">
                        <Caret $size={4} />
                    </ScrollButton>
                </ListScroll>
            </FieldList>
            <AreaIntro>在以下区域间拖动字段:</AreaIntro>
            <Areas>
                {areas.map((area) => (
                    <Area key={area.icon} $right={area.right} $second={area.second}>
                        <AreaHead $second={area.second}>
                            <AreaIcon kind={area.icon} />
                            {area.title}
                        </AreaHead>
                        <AreaBox>
                            {area.item && (
                                <AreaItem>
                                    {area.item}
                                    <Caret $size={4} $color="#000000" />
                                </AreaItem>
                            )}
                        </AreaBox>
                    </Area>
                ))}
            </Areas>
            <PaneFoot>
                <DeferLabel>
                    <Check type="checkbox" />
                    推迟布局更新
                </DeferLabel>
                <UpdateButton disabled>更新</UpdateButton>
            </PaneFoot>
            <Highlight $left={-19} $top={146} $width={137} $height={112} />
            <Highlight $left={-19} $top={336} $width={271} $height={165} />
        </Pane>
    );
}

function App() {
    return (
        <>
            <GlobalStyle />
            <Window>
                <TitleBar>
                    <TitleLeft>
                        <QuickAccess>
                            <QuickButton aria-label="保存" $after={27}>
                                <SaveIcon />
                            </QuickButton>
                            <QuickButton aria-label="撤消" $after={14}>
                                <UndoIcon />
                                <Caret $color="#ffffff" />
                            </QuickButton>
                            <QuickButton aria-label="恢复" disabled $after={20}>
                                <UndoIcon flip />
                                <Caret $color="#ffffff" />
                            </QuickButton>
                            <QuickButton aria-label="自定义快速访问工具栏">
                                <svg width="7" height="8" viewBox="0 0 7 8">
                                    <path d="M0 1h7" stroke="#fff" />
                                    <path d="M0 4h7L3.500 7.500z" fill="#fff" />
                                </svg>
                            </QuickButton>
                        </QuickAccess>
                        <WindowTitle>Excel操作技巧1-data.xlsx - Excel</WindowTitle>
                    </TitleLeft>
                    <ContextTitle>数据透视表工具</ContextTitle>
                    <WindowControls>
                        <ControlButton aria-label="功能区显示选项">
                            <svg width="13" height="11" viewBox="0 0 13 11">
                                <path d="M.5.5h12v10H.5zM0 2.500h13M6.500 9V5M4 6.500L6.500 4 9 6.500" fill="none" stroke="#fff" />
                            </svg>
                        </ControlButton>
                        <ControlButton aria-label="最小化">
                            <svg width="9" height="6" viewBox="0 0 9 6">
                                <path d="M0 5h9" stroke="#fff" strokeWidth="2" />
                            </svg>
                        </ControlButton>
                        <ControlButton aria-label="最大化">
                            <svg width="10" height="10" viewBox="0 0 10 10">
                                <path d="M.5.5h9v9h-9zM0 1.500h10" fill="none" stroke="#fff" />
                                <path d="M0 0h10v3H0z" fill="#fff" />
                            </svg>
                        </ControlButton>
                        <ControlButton aria-label="关闭窗口">
                            <CrossIcon size={11} color="#fff" />
                        </ControlButton>
                    </WindowControls>
                </TitleBar>
                <TabRow>
                    <FileTab>文件</FileTab>
                    {ribbonTabs.map((name) => (
                        <TabButton key={name}>{name}</TabButton>
                    ))}
                    <ContextTabs>
                        <ContextTab $active>分析</ContextTab>
                        <ContextTab>设计</ContextTab>
                    </ContextTabs>
                    <TellMe>
                        <BulbIcon />
                        <TellMeInput placeholder="告诉我您想要做什么..." aria-label="告诉我您想要做什么" />
                    </TellMe>
                    <AccountArea>
                        <LoginButton>登录</LoginButton>
                        <ShareButton>
                            <PersonIcon />
                            共享
                        </ShareButton>
                    </AccountArea>
                </TabRow>
                <Ribbon />
                <FormulaBar>
                    <NameBox>
                        <NameInput defaultValue="C40" aria-label="名称框" />
                        <Caret $size={4} />
                    </NameBox>
                    <Grip>
                        <GripDot />
                        <GripDot />
                        <GripDot />
                    </Grip>
                    <FormulaButtons>
                        <button aria-label="取消">
                            <CrossIcon size={12} color="#b4b4b4" weight={1.5} />
                        </button>
                        <button aria-label="输入">
                            <svg width="14" height="11" viewBox="0 0 14 11">
                                <path d="M1 6l4 4 8-9" fill="none" stroke="#b4b4b4" strokeWidth="2" />
                            </svg>
                        </button>
                        <button aria-label="插入函数">
                            <svg width="15" height="16" viewBox="0 0 15 16">
                                <FxText x="1" y="12" $size={14} $weight={700} fill="#555">fx</FxText>
                            </svg>
                        </button>
                    </FormulaButtons>
                    <FormulaField>
                        <FormulaInput defaultValue="24500" aria-label="编辑栏" />
                        <svg width="9" height="7" viewBox="0 0 9 7">
                            <path d="M1 1.500L4.500 5 8 1.500" fill="none" stroke="#555" strokeWidth="2" />
                        </svg>
                    </FormulaField>
                </FormulaBar>
                <Main>
                    <Workbook>
                        <SheetArea>
                            <Sheet />
                            <ScrollColumn>
                                <ScrollButton aria-label="向上滚动">
                                    <CaretUp $size={4} />
                                </ScrollButton>
                                <ScrollSpace $grow={248} />
                                <ScrollThumb $grow={226} />
                                <ScrollButton aria-label="向下滚动">
                                    <Caret $size={4} />
                                </ScrollButton>
                            </ScrollColumn>
                        </SheetArea>
                        <SheetTabBar />
                    </Workbook>
                    <FieldPane />
                </Main>
                <StatusBar>
                    就绪
                    <StatusRight>
                        <ViewButton $active aria-label="普通">
                            <svg width="13" height="13" viewBox="0 0 13 13">
                                <path d="M.5.5h12v12H.5zM4.500 0v13M8.500 0v13M0 4.500h13M0 8.500h13" fill="none" stroke="#555" />
                            </svg>
                        </ViewButton>
                        <ViewButton aria-label="页面布局视图">
                            <svg width="14" height="13" viewBox="0 0 14 13">
                                <path d="M.5.5h13v12H.5zM3.500 2.500h7v8h-7zM5 4.500h4M5 6.500h4M5 8.500h4" fill="none" stroke="#555" />
                            </svg>
                        </ViewButton>
                        <ViewButton aria-label="分页预览">
                            <svg width="14" height="13" viewBox="0 0 14 13">
                                <path d="M.5.5h13v12H.5zM4.500 0v7.500h5V0M0 7.500h4.500" fill="none" stroke="#555" />
                            </svg>
                        </ViewButton>
                        <ZoomButton aria-label="缩小">−</ZoomButton>
                        <ZoomSlider type="range" min="10" max="190" defaultValue="100" aria-label="显示比例" />
                        <ZoomButton aria-label="放大">+</ZoomButton>
                        <ZoomValue>100%</ZoomValue>
                    </StatusRight>
                </StatusBar>
            </Window>
        </>
    );
}

export default App;
